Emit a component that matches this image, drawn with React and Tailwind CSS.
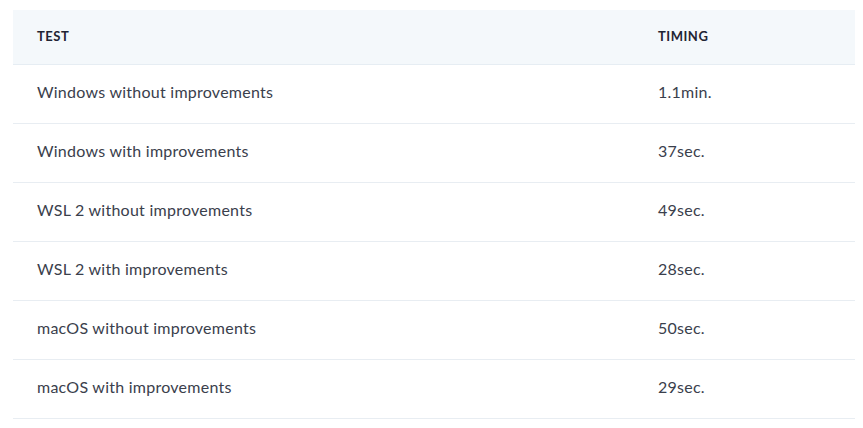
const rows = [
  ["Windows without improvements", "1.1min."],
  ["Windows with improvements", "37sec."],
  ["WSL 2 without improvements", "49sec."],
  ["WSL 2 with improvements", "28sec."],
  ["macOS without improvements", "50sec."],
  ["macOS with improvements", "29sec."],
];

export default function App() {
  return (
    <div className="bg-white min-h-screen pt-[10px] pl-[13px] font-['Lato',sans-serif]">
      <table className="w-[842px] border-collapse text-left">
        <thead>
          <tr className="bg-[#f4f8fb] border-b border-[#e6edf3]">
            <th className="h-[54px] pl-6 text-[13px] font-bold uppercase text-[#1f2433] tracking-[0.04em] w-[645px]">
              Test
            </th>
            <th className="h-[54px] text-[13px] font-bold uppercase text-[#1f2433] tracking-[0.04em]">
              Timing
            </th>
          </tr>
        </thead>
        <tbody>
          {rows.map(([test, time]) => (
            <tr key={test} className="border-b border-[#e8edf2]">
              <td className="h-[59px] pl-6 pb-[3px] text-[16px] tracking-[0.25px] text-[#3a404c]">{test}</td>
              <td className="h-[59px] pb-[3px] text-[16px] tracking-[0.25px] text-[#3a404c]">{time}</td>
            </tr>
          ))}
        </tbody>
      </table>
    </div>
  );
}
